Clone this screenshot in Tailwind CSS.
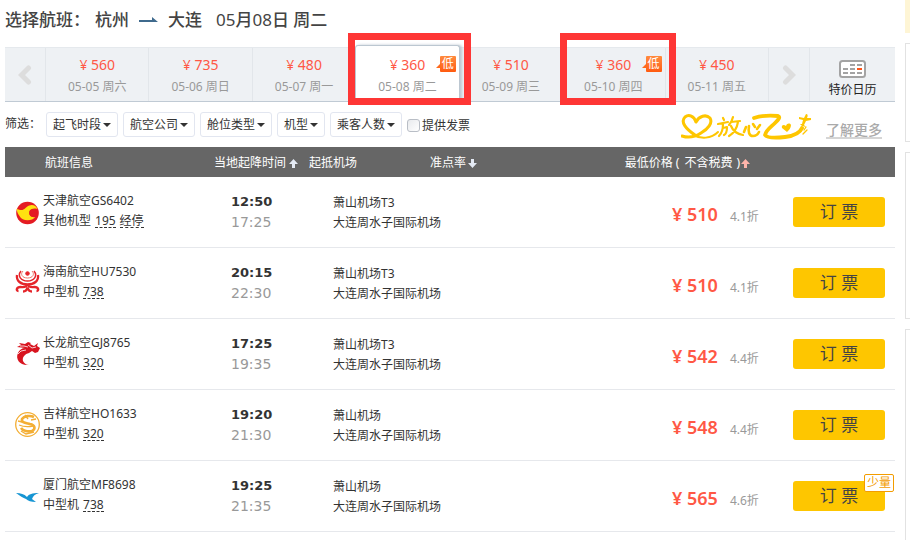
<!DOCTYPE html>
<html lang="zh-CN">
<head>
<meta charset="utf-8">
<title>选择航班</title>
<script src="https://cdn.jsdelivr.net/npm/@tailwindcss/browser@4"></script>
</head>
<body class="bg-white overflow-hidden font-['Noto_Sans','Noto_Sans_CJK_SC',sans-serif] text-xs text-[#333]">
<div class="flex gap-[10px] pl-[5px] h-screen">
<main class="flex-1 min-w-0">
  <h1 class="flex items-center h-[40px] text-[17px] font-medium text-[#444] whitespace-nowrap">
    <span>选择航班：</span>
    <span class="ml-[5px]">杭州</span>
    <svg class="mx-[10px]" width="19" height="6" viewBox="0 0 19 6" aria-label="至"><path d="M0 3h13V0l6 5H0z" fill="#3f6a8d"/></svg>
    <span>大连</span>
    <span class="ml-[14px] font-normal">05<span class="font-medium">月</span>08<span class="font-medium">日 周二</span></span>
  </h1>

  <nav class="relative flex mt-[7px] h-[55px] bg-[#eef1f4] border-t border-t-[#e5e9ed] border-b border-b-[#c0cad4] text-center">
    <button class="w-[41px] shrink-0 flex items-center justify-center border-r border-[#e2e6ea]" aria-label="前一天"><svg width="14" height="20" viewBox="0 0 14 20" fill="none" stroke="#ddd" stroke-width="5" stroke-linecap="round"><path d="M10.500 3 3.500 10l7 7"/></svg></button>
    <a href="#" class="flex-1 pt-[6px] border-r border-[#e2e6ea]"><span class="block text-sm leading-[22px] text-[#ff5845]">¥ 560</span><span class="block leading-[22px] text-[#999]">05-05 周六</span></a>
    <a href="#" class="flex-1 pt-[6px] border-r border-[#e2e6ea]"><span class="block text-sm leading-[22px] text-[#ff5845]">¥ 735</span><span class="block leading-[22px] text-[#999]">05-06 周日</span></a>
    <a href="#" class="flex-1 pt-[6px]"><span class="block text-sm leading-[22px] text-[#ff5845]">¥ 480</span><span class="block leading-[22px] text-[#999]">05-07 周一</span></a>
    <a href="#" class="relative flex-1 -mt-[3px] pt-[8px] bg-white border border-b-0 border-[#bcc7d1] rounded-t-[3px] shadow-[2px_0_3px_#bcc7d1]" aria-current="date"><span class="block text-sm leading-[22px] text-[#ff5845]">¥ 360</span><span class="block leading-[22px] text-[#999]">05-08 周二</span>
      <span class="absolute right-[3px] top-[10px] size-[16px] rounded-[1px] bg-linear-to-b from-[#ff8a3d] to-[#ff5a0d] text-white leading-[16px]">低<svg class="absolute -left-[4px] bottom-[3px]" width="5" height="6"><path d="M5 0v5H0z" fill="#ff6a1d"/></svg></span></a>
    <a href="#" class="flex-1 pt-[6px]"><span class="block text-sm leading-[22px] text-[#ff5845]">¥ 510</span><span class="block leading-[22px] text-[#999]">05-09 周三</span></a>
    <a href="#" class="relative flex-1 pt-[6px] border-r border-[#e2e6ea]"><span class="block text-sm leading-[22px] text-[#ff5845]">¥ 360</span><span class="block leading-[22px] text-[#999]">05-10 周四</span>
      <span class="absolute right-[3px] top-[8px] size-[16px] rounded-[1px] bg-linear-to-b from-[#ff8a3d] to-[#ff5a0d] text-white leading-[16px]">低<svg class="absolute -left-[4px] bottom-[3px]" width="5" height="6"><path d="M5 0v5H0z" fill="#ff6a1d"/></svg></span></a>
    <a href="#" class="flex-1 pt-[6px] border-r border-[#e2e6ea]"><span class="block text-sm leading-[22px] text-[#ff5845]">¥ 450</span><span class="block leading-[22px] text-[#999]">05-11 周五</span></a>
    <button class="w-[41px] shrink-0 flex items-center justify-center border-r border-[#e2e6ea]" aria-label="后一天"><svg width="14" height="20" viewBox="0 0 14 20" fill="none" stroke="#ddd" stroke-width="5" stroke-linecap="round"><path d="m3.500 3 7 7-7 7"/></svg></button>
    <a href="#" class="w-[85px] shrink-0 flex flex-col items-center pt-[12px]">
      <svg width="27" height="18" viewBox="0 0 27 18"><rect x="1" y="1" width="25" height="16" rx="2.500" fill="#fff" stroke="#a3a3a3" stroke-width="2"/><path d="M11 5h5M18 5h5M4 9h5M11 9h5M4 13h5M11 13h5M18 13h5" stroke="#a3a3a3" stroke-width="2"/><path d="M18 9h5" stroke="#ff5418" stroke-width="2"/></svg>
      <span class="mt-[2px] leading-[20px] text-[#222]">特价日历</span></a>
    <span class="absolute left-[343px] -top-[15px] w-[123px] h-[72px] border-[7px] border-[#fe3635]"></span>
    <span class="absolute left-[555px] -top-[15px] w-[116px] h-[72px] border-[7px] border-[#fe3635]"></span>
  </nav>

  <form class="flex items-center h-[45px]">
    <span class="w-[41px] pb-[2px] whitespace-nowrap shrink-0">筛选：</span>
    <div class="flex gap-[5px]">
      <button type="button" class="flex items-center gap-[2px] h-[25px] px-[6px] border border-[#e2e6f0] rounded-[3px]">起飞时段<svg width="8" height="4"><path d="M0 0h8L4 4z" fill="#333"/></svg></button>
      <button type="button" class="flex items-center gap-[2px] h-[25px] px-[6px] border border-[#e2e6f0] rounded-[3px]">航空公司<svg width="8" height="4"><path d="M0 0h8L4 4z" fill="#333"/></svg></button>
      <button type="button" class="flex items-center gap-[2px] h-[25px] px-[6px] border border-[#e2e6f0] rounded-[3px]">舱位类型<svg width="8" height="4"><path d="M0 0h8L4 4z" fill="#333"/></svg></button>
      <button type="button" class="flex items-center gap-[2px] h-[25px] px-[6px] border border-[#e2e6f0] rounded-[3px]">机型<svg width="8" height="4"><path d="M0 0h8L4 4z" fill="#333"/></svg></button>
      <button type="button" class="flex items-center gap-[2px] h-[25px] px-[6px] border border-[#e2e6f0] rounded-[3px]">乘客人数<svg width="8" height="4"><path d="M0 0h8L4 4z" fill="#333"/></svg></button>
      <label class="flex items-center gap-[2px] pt-[2px]"><input type="checkbox" class="appearance-none size-[13px] border border-[#b9bec6] rounded-[3px] bg-linear-to-br from-[#e8eaed] to-white">提供发票</label>
    </div>
    <svg class="ml-auto mt-[4px]" width="131" height="28" viewBox="0 0 131 28" fill="none" stroke="#fec600" stroke-linecap="round" stroke-linejoin="round" role="img" aria-label="放心飞">
      <path stroke-width="3" d="M15 9C13 3 8 1 4 4c-5 5 1 12 10 18M15 9c3-6 10-8 14-4 3 5-2 11-9 15-6 4-13 5-19 3"/>
      <path stroke-width="2" d="M12 22c8 4 18 4 25-3"/>
      <path stroke-width="2.200" d="M42 5l1 2M37 11l10-2M42 11c0 5-1 9-4 12M42 15l4-1c0 4-1 7-3 8M52 4c-1 4-2 6-4 8M50 9l9-1M57 9c-1 6-4 11-9 14M50 13c2 5 6 8 12 9"/>
      <path stroke-width="2.600" d="M65 14l-2 5M68 13c-1 6 0 10 4 10 3 0 5-2 6-4M72 11l2 3M79 12l-3 4"/>
      <path stroke-width="3.800" d="M73 5c6-2 14-3 24-2 3 1 0 4-3 7-4 4-9 7-10 12 2 3 11 3 20 2 8-1 15-4 17-9"/>
      <path d="M106 19l-5-4c-1-3 2-4 4-2 1-3 4-3 5-1 0 3-2 5-4 7z" fill="#fec600" stroke="none"/>
      <path d="M125 1c2 0 2 2 1 4l4 0 0 2-5 1-2 4 2 2-4-1-2-2 2 0 1-4-4-1 0-2 5 1z" fill="#fec600" stroke="none"/>
      <path stroke-width="1.300" d="M125 14l-2 3M122 15l-3 4M126 17l-4 4"/>
    </svg>
    <a href="#" class="ml-[14px] mr-[13px] pt-[11px] text-sm leading-[20px] text-[#aaa] font-medium underline decoration-2 decoration-[#d5d5d5] underline-offset-[2px]">了解更多</a>
  </form>

  <table class="w-full table-fixed border-separate border-spacing-0 text-left">
    <colgroup><col class="w-[209px]"><col class="w-[95px]"><col class="w-[121px]"><col><col class="w-[107px]"></colgroup>
    <thead class="bg-[#666] text-white">
      <tr class="h-[30px]">
        <th class="font-normal pt-[2px] pb-0 pl-[40px]">航班信息</th>
        <th class="font-normal pt-[2px] pb-0 whitespace-nowrap">当地起降时间<svg class="inline ml-[3px]" width="9" height="9"><path d="M4.500 0 9 5H6v4H3V5H0z" fill="#e4eaf4"/></svg></th>
        <th class="font-normal pt-[2px] pb-0">起抵机场</th>
        <th class="font-normal pt-[2px] pb-0">准点率<svg class="inline ml-[2px]" width="9" height="9"><path d="M4.500 9 9 4H6V0H3v4H0z" fill="#e4eaf4"/></svg></th>
        <th class="font-normal pt-[2px] pb-0"><span class="flex justify-end items-center -ml-[200px] pr-[145px] whitespace-nowrap">最低价格<span class="pl-[3px] pr-[5px]">(</span>不含税费<span class="pl-[4px] pr-px">)</span><svg width="9" height="9"><path d="M4.500 0 9 5H6v4H3V5H0z" fill="#ffb4aa"/></svg></span></th>
      </tr>
    </thead>
    <tbody id="flights"></tbody>
  </table>
</main>
<aside class="w-[5px] shrink-0 flex flex-col gap-[10px] overflow-hidden">
  <div class="h-[33px] bg-[#fef5d5]"></div>
  <div class="h-[99px] border border-r-0 border-[#e2e2e2]"></div>
  <div class="h-[167px] border border-r-0 border-[#e2e2e2]"></div>
  <div class="flex-1 border border-r-0 border-b-0 border-[#e2e2e2]"></div>
</aside>
</div>
<script>
const logos = [
  '<circle cx="12.500" cy="14" r="11.300" fill="#e41b23"/><path d="M1.500 10c4 1 6 2 9-1 4-4 10-4 12 1-4-1-7 0-8 2-1 4 2 7 6 6-3 4-13 5-16-1C3 15 2 13 1.500 10" fill="#ffe110"/><circle cx="18" cy="14" r="3.800" fill="#e41b23"/>',
  '<g fill="none" stroke="#e5242a"><circle cx="12.500" cy="3.500" r="1.800" fill="#e5242a"/><path stroke="#ee7769" stroke-width="1" d="M8 1C5 4 7 8 12.500 8S20 4 17 1"/><path stroke-width="1.500" d="M6 1C2 6 6 11 12.500 11S23 6 19 1"/><path stroke-width="2.300" d="M2 5c-1 6 4 9.500 10.500 9.500S24 11 23 5"/><path stroke-width="2.300" d="M12.500 14c-1 4-4 3-7 3-4 0-5 4-2 4M12.500 14c1 4 4 3 7 3 4 0 5 4 2 4M8 21.500c3 0 4-2 4.500-4 .5 2 1.500 4 4.500 4"/></g>',
  '<path d="M14 24C5 25 0 18 3 12c1-3 4-5 7-5L2 6l4-2-2-2 6 1 3-2 3 1-1 1 4 2 4-3-1 3 3 2-2 4-3 1-3-2-3 2c-4 1-7 4-6 8 1 2 3 4 6 4" fill="#d8141f"/><path d="M5 5l4 0 4 1M13 4l4 3 4-1M3 13l3-3 5-1" fill="none" stroke="#fff" stroke-width=".8"/>',
  '<g fill="none" stroke="#f3ae34"><circle cx="12.500" cy="12.500" r="11.800" stroke-width="1.300"/><path stroke-width="2.600" d="M19 5c-4-2-10-1-12 2-1 4 4 4 8 5 5 1 6 5 2 7-4 1-9 0-11-3"/><path stroke-width="1.300" d="M4 13c5 2 9 2 14 1M10 3l3 4M16 8l5-1M6 19l5 3 8-2M3 9l4 1"/></g>',
  '<path d="M1 10c5 0 8 1 11 4 2-3 5-4 12-4-4 1-6 3-7 6l4 3c-5 0-8-1-10-3-3-1-6-3-10-6" fill="#1695d3"/>'
];
const rows = [
  ['天津航空GS6402','其他机型',['195','经停'],'12:50','17:25','萧山机场T3','510','4.1'],
  ['海南航空HU7530','中型机',['738'],'20:15','22:30','萧山机场T3','510','4.1'],
  ['长龙航空GJ8765','中型机',['320'],'17:25','19:35','萧山机场T3','542','4.4'],
  ['吉祥航空HO1633','中型机',['320'],'19:20','21:30','萧山机场','548','4.4'],
  ['厦门航空MF8698','中型机',['738'],'19:25','21:35','萧山机场','565','4.6']
];
document.getElementById('flights').innerHTML = rows.map((r, i) => `
<tr class="h-[71px] leading-[20px] align-top">
  <td class="border-b border-[#e6e8ec] pl-[10px] pt-[14px]"><div class="flex gap-[3px]">
    <svg class="mt-[8px] shrink-0" width="25" height="26" viewBox="0 0 25 26">${logos[i]}</svg>
    <div><div>${r[0]}</div><div class="flex gap-[4px]">${r[1]}${r[2].map(t => `<span class="h-[17px] border-b border-dashed border-[#333]">${t}</span>`).join('')}</div></div></div></td>
  <td class="border-b border-[#e6e8ec] pt-[15px] pl-[17px] font-['DejaVu_Sans',sans-serif]"><div class="text-[13px] leading-[20px] font-bold">${r[3]}</div><div class="text-sm leading-[20px] text-[#999]">${r[4]}</div></td>
  <td colspan="2" class="border-b border-[#e6e8ec] pt-[16px] pl-[24px]"><div>${r[5]}</div><div>大连周水子国际机场</div></td>
  <td class="border-b border-[#e6e8ec] pt-[20px] pr-[10px]"><div class="flex justify-end items-start -ml-[200px]">
    <div class="w-[121px] shrink-0 flex items-baseline pt-[5px] whitespace-nowrap"><span class="text-lg leading-[24px] font-semibold text-[#ff5845]">¥ ${r[6]}</span><span class="ml-[12px] text-[#999]">${r[7]}折</span></div>
    <div class="relative"><button class="block w-[92px] h-[30px] rounded-[3px] bg-[#fec600] text-[17px] text-[#444] whitespace-nowrap">订 票</button>${i === 4 ? '<span class="absolute -right-[9px] -top-[7px] w-[30px] h-[18px] border border-[#f39c00] rounded-[2px] bg-white text-[#f39c00] leading-[16px] text-center">少量</span>' : ''}</div></div></td>
</tr>`).join('');
</script>
</body>
</html>
